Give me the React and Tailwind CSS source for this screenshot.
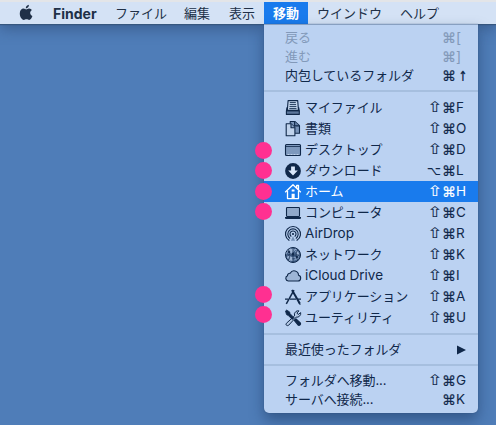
const Svg = ({ children, ...p }) => (
  <svg width="18" height="18" viewBox="0 0 18 18" fill="none" stroke="currentColor" strokeWidth="1.1" strokeLinejoin="round" {...p}>
    {children}
  </svg>
);

const icons = {
  files: (
    <Svg>
      <path d="M4.1 1.6h9.6l.8 10H3.3z" fill="#c6d8ef" />
      <path d="M5.8 3.6h6M5.7 5.6h6.4M5.5 7.6h6.9M5.3 9.6h7.2" strokeWidth=".9" />
      <path d="M3 8.5 2.4 12v3.4h12.9V12l-.6-3.5V11.4H3z" fill="#5c779d" />
      <path d="M2.4 11.8h12.9" strokeWidth="1.2" />
    </Svg>
  ),
  docs: (
    <Svg>
      <path d="M6.2 3.4V1.5h4.6l4.7 4.2v7.5H11" fill="#7893b8" />
      <path d="M10.6 1.5v4.4h4.9" fill="#6682a8" />
      <path d="M2.2 3.8h4.9l3.8 3.7v8.3H2.2z" fill="#c0d3ec" />
      <path d="M7 3.8v3.9h3.9" fill="#8ba5c8" />
    </Svg>
  ),
  desktop: (
    <Svg>
      <rect x="1.5" y="3.5" width="15" height="11" rx="1" fill="#7d98bd" />
      <path d="M2 5.5h14" strokeWidth=".8" />
      <path d="M3.5 13.5h11" stroke="#bed0e9" strokeWidth="1.1" strokeDasharray="2 1" />
    </Svg>
  ),
  download: (
    <Svg>
      <circle cx="9" cy="9" r="7.9" fill="currentColor" stroke="none" />
      <path d="M7.1 4.4h3.8v4h2.9L9 13.6 4.2 8.4h2.9z" fill="#d9e7fa" stroke="none" />
    </Svg>
  ),
  home: (
    <Svg>
      <path d="M1.2 9.3 9 1.8l7.8 7.5M12.7 5V2.3h1.8v4.5" strokeWidth="1.3" />
      <path d="M3.5 8v7.6h11V8" strokeWidth="1.3" />
      <path d="M7.6 15.8v-5h3.1v5zM7.7 6.5h2.8v2H7.7z" fill="currentColor" stroke="none" />
    </Svg>
  ),
  computer: (
    <Svg>
      <rect x="2.5" y="3.5" width="13" height="9" rx=".8" fill="#91a9ca" />
      <path d="M1 13h16v1q0 1-1.2 1H2.2Q1 15 1 14z" fill="currentColor" stroke="none" />
    </Svg>
  ),
  airdrop: (
    <Svg strokeWidth="1.15" strokeLinecap="round">
      <path d="M5 15.3a7.5 7.5 0 1 1 8 0M5.8 13.2a5.2 5.2 0 1 1 6.4 0M7 11.2a3 3 0 1 1 4 0" />
      <circle cx="9" cy="9" r="1.1" fill="currentColor" stroke="none" />
      <path d="m9 11-2.1 4.8h4.2z" fill="#7591b7" stroke="none" />
    </Svg>
  ),
  network: (
    <Svg strokeWidth=".7">
      <circle cx="9" cy="9" r="7.5" fill="#45628a" strokeWidth="1" />
      <path d="m3 5 3-2.5 4 .8L8.5 6 5 8zM11 5l3 .5 2 4-3-1zM4 10l4 1 1 4-3-1zM11 11l3 0-2 3z" fill="#9fb5d3" stroke="none" />
      <path d="M2 7 12 3l2 10-8 2zM4 4l11 7M9 2 5 15M12 3 3 12l12-1" stroke="#9db5d6" />
      <path d="M9 1.5v15M1.5 9h15M4 3q4 6 0 12M14 3q-4 6 0 12" />
      <circle cx="9" cy="8" r="1.1" fill="currentColor" />
      <circle cx="13" cy="11" r="1" fill="currentColor" />
      <circle cx="5" cy="6" r=".9" fill="currentColor" />
    </Svg>
  ),
  cloud: (
    <Svg>
      <path d="M4.2 14H13.6a2.9 2.9 0 0 0 .9-5.7A4.4 4.4 0 0 0 6.2 6.2a2.4 2.4 0 0 0-2.7 2.6A2.7 2.7 0 0 0 4.2 14z" fill="#9db5d6" />
    </Svg>
  ),
  apps: (
    <Svg strokeLinejoin="miter">
      <path d="M8 2 15.8 15.5" strokeWidth="2" />
      <path d="M10 2.2 2.3 15.8" strokeWidth="1.5" />
      <path d="M1 11.2h3M6 11.2h6M14 11.2h3" strokeWidth="1.3" />
      <path d="m14.5 14 1.8 2.6" strokeWidth="1.2" />
    </Svg>
  ),
  tools: (
    <Svg>
      <path d="m2.4 14.3 8.1-7.4q-.8-3 1.5-4.5 1.5-.9 3-.5L12.9 4l1.3 1.5 2.5-1.9q.4 2-1.2 3.6-1.3 1.3-3.3.9L4.6 16.3Q3.5 17 2.4 16.2 1.5 15.3 2.4 14.3z" fill="#b3c8e4" strokeWidth="1" />
      <path d="m1.5 2 1.1-.9 3 1.8.5 1.8 4 4-1.8 1.8-4-4-1.8-.9z" fill="currentColor" strokeWidth=".8" />
      <path d="m10.3 11.5 1.7-1.7 4.3 4q.8 1-.2 2t-2.1.2z" fill="currentColor" />
    </Svg>
  ),
};

function Keys({ value }) {
  const [mod, key] = value;
  const arrow = key === "↑";
  const bracket = key === "[" || key === "]";
  return (
    <span className="absolute left-[164px] top-0 flex h-full items-center">
      <span className="flex w-[14px] justify-center font-['DejaVu_Sans'] leading-none">
        <span className={mod === "⌥" ? "-ml-[2px] text-[12px] leading-none [-webkit-text-stroke:0.2px_currentColor]" : "inline-block scale-x-[1.3] text-[15px] leading-none"}>{mod}</span>
      </span>
      <span className="flex w-[14px] justify-center font-['DejaVu_Sans'] text-[14px] leading-none [-webkit-text-stroke:0.2px_currentColor]">⌘</span>
      <span className={arrow ? "ml-px inline-block scale-x-75 font-['DejaVu_Sans'] text-[14px] font-bold leading-none" : bracket ? "font-['Inter'] text-[14px]" : "font-['Inter'] text-[13.5px]"}>{key}</span>
    </span>
  );
}

function Row({ label, icon, keys, disabled, active }) {
  const latin = icon === "airdrop" || icon === "cloud";
  return (
    <div className={`relative flex items-center whitespace-nowrap ${icon ? "h-[21px] pl-5" : "h-[19px] pl-[21px]"} ${active ? "bg-[#197bed] text-white" : disabled ? "text-[#8299b9]" : "text-[#10284a]"}`}>
      {icon && <span className="mr-[3px] shrink-0">{icons[icon]}</span>}
      <span className={latin ? "text-[13.5px]" : "tracking-[-0.08px]"}>{label}</span>
      {keys && <Keys value={keys} />}
    </div>
  );
}

const Separator = () => (
  <div className="flex h-3 items-center"><div className="h-[2px] w-full bg-[#a6bfdf]" /></div>
);

const places = [
  ["マイファイル", "files", ["⇧", "F"]],
  ["書類", "docs", ["⇧", "O"]],
  ["デスクトップ", "desktop", ["⇧", "D"]],
  ["ダウンロード", "download", ["⌥", "L"]],
  ["ホーム", "home", ["⇧", "H"]],
  ["コンピュータ", "computer", ["⇧", "C"]],
  ["AirDrop", "airdrop", ["⇧", "R"]],
  ["ネットワーク", "network", ["⇧", "K"]],
  ["iCloud Drive", "cloud", ["⇧", "I"]],
  ["アプリケーション", "apps", ["⇧", "A"]],
  ["ユーティリティ", "tools", ["⇧", "U"]],
];

const Dot = ({ className }) => (
  <span className={`absolute left-[255px] size-[17px] rounded-full bg-[#ff3091] ${className}`} />
);

export default function App() {
  return (
    <div className="relative h-[425px] w-[496px] overflow-hidden bg-[#4f7db8] font-['Inter','Noto_Sans_CJK_JP',sans-serif] text-[13px] leading-[19px]">
      <div className="relative z-10 flex h-6 items-stretch whitespace-nowrap border-t-2 border-[#e3e5e8] bg-[#d4e2f5] pl-[19px] text-[#203047] shadow-[0_1px_1px_#36577f,0_5px_14px_#27426a80]">
        <svg className="mt-[2px] h-[17px] w-[14px]" viewBox="0 0 14 17" fill="currentColor">
          <path d="M9.9.7q.1 1.5-.8 2.6T6.8 4.4Q6.7 3 7.6 2T9.9.7zM7.2 5.4c.8 0 1.6-.9 3-.8 1.2.1 2.1.6 2.7 1.5-2.5 1.5-2.1 4.8.5 5.9-.7 1.9-1.8 3.9-3.2 3.9-1 0-1.4-.6-2.7-.6s-1.7.6-2.7.6C2.7 15.9.5 12.3.8 9c.2-2.8 1.8-4.3 3.7-4.4 1.1 0 2.1.8 2.7.8z" />
        </svg>
        <div className="flex flex-1 items-center">
          <span className="ml-5 w-[62px] text-[14px] font-bold">Finder</span>
          <span className="w-[69px]">ファイル</span>
          <span className="w-[45px]">編集</span>
          <span className="w-[35px]">表示</span>
          <span className="flex h-full w-[44px] items-center justify-center bg-[#197bed] font-bold text-white">移動</span>
          <span className="ml-[9px] w-[83px]">ウインドウ</span>
          <span>ヘルプ</span>
        </div>
      </div>
      <div className="relative z-20 ml-[264px] h-[389px] w-[214px] rounded-b-[5px] bg-[#bbd2f2] py-1 shadow-[0_0_1px_#284875,0_7px_14px_#17335b80] before:absolute before:inset-x-0 before:top-0 before:h-px before:bg-[#879fc0]">
        <Row label="戻る" keys={["", "["]} disabled />
        <Row label="進む" keys={["", "]"]} disabled />
        <Row label="内包しているフォルダ" keys={["", "↑"]} />
        <Separator />
        {places.map(([label, icon, keys]) => (
          <Row key={label} label={label} icon={icon} keys={keys} active={icon === "home"} />
        ))}
        <Separator />
        <div className="relative">
          <Row label="最近使ったフォルダ" />
          <svg className="absolute left-[193px] top-[5px]" width="9" height="10" viewBox="0 0 9 10"><path d="M0 .5 9 5 0 9.5z" fill="#10284a" /></svg>
        </div>
        <Separator />
        <Row label="フォルダへ移動..." keys={["⇧", "G"]} />
        <Row label="サーバへ接続..." keys={["", "K"]} />
      </div>
      <div className="absolute inset-0 z-30">
        <Dot className="top-[142px]" />
        <Dot className="top-[162px]" />
        <Dot className="top-[183px]" />
        <Dot className="top-[203px]" />
        <Dot className="top-[286px]" />
        <Dot className="top-[306px]" />
      </div>
    </div>
  );
}
